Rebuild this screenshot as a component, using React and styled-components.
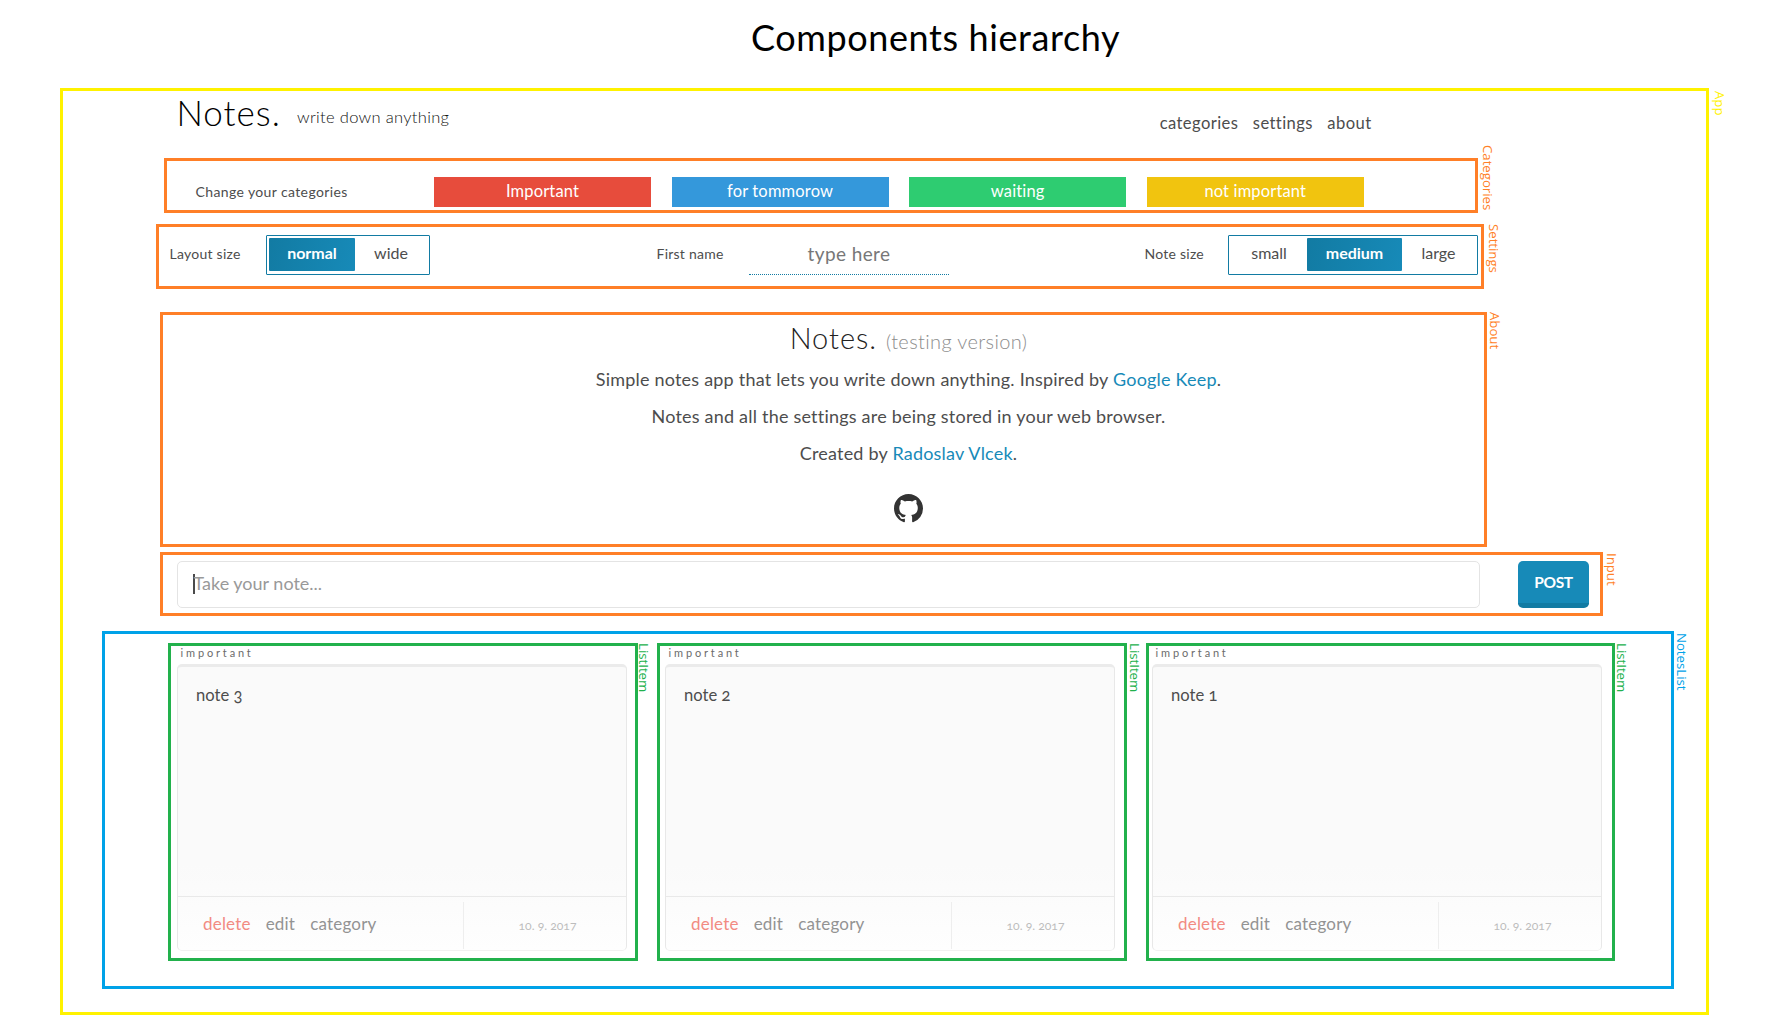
import React from "react";
import styled, { createGlobalStyle } from "styled-components";

const colors = {
  app: "#fff200",
  section: "#ff7f27",
  list: "#00a2e8",
  item: "#22b14c",
  primary: "#178ab8",
  primaryDark: "#127ba3",
  text: "#4d4d4d",
};

const GlobalStyle = createGlobalStyle`
  *, *::before, *::after { box-sizing: border-box; }
  body {
    margin: 0;
    background: #fff;
    color: ${colors.text};
    font-family: Lato, "Liberation Sans", sans-serif;
    white-space: nowrap;
  }
  h1, h2, p { margin: 0; font-weight: 400; }
`;

const Page = styled.main`
  width: 1782px;
  height: 1024px;
  overflow: hidden;
  display: flex;
  flex-direction: column;
`;

const Title = styled.h1`
  height: 88px;
  padding: 14px 0 0 751px;
  color: #000;
  font-size: 36px;
  line-height: 47px;
  letter-spacing: 0.6px;
`;

/* Outlined region that carries the name of its component on the right edge */
const Frame = styled.section`
  position: relative;
  flex: none;
  width: ${(p) => p.$width}px;
  height: ${(p) => p.$height}px;
  margin: ${(p) => p.$top || 0}px 0 0 ${(p) => p.$left || 0}px;
  border: 3px solid ${(p) => p.$color};
`;

const FrameName = styled.span`
  position: absolute;
  left: calc(100% + ${(p) => p.$x}px);
  top: ${(p) => p.$y}px;
  writing-mode: vertical-rl;
  color: ${(p) => p.$color};
  font-family: "Open Sans", sans-serif;
  font-size: 13.2px;
  line-height: 16px;
`;

const Header = styled.header`
  display: flex;
  align-items: flex-start;
  height: 67px;
  padding: 2px 334.5px 0 113.5px;
`;

const Logo = styled.div`
  width: 120.5px;
  color: #000;
  font-size: 35px;
  font-weight: 300;
  line-height: 39px;
  letter-spacing: 1px;
`;

const Tagline = styled.div`
  margin-top: 14px;
  color: #111;
  font-size: 16.5px;
  font-weight: 300;
  line-height: 20px;
  letter-spacing: 0.32px;
`;

const Nav = styled.nav`
  display: flex;
  gap: 14.5px;
  margin: 20px 0 0 auto;
  font-size: 16.6px;
  line-height: 20px;
  letter-spacing: 0.4px;
`;

const CategoryRow = styled.div`
  display: flex;
  gap: 20.6px;
  padding: 16px 0 0 28.5px;
`;

const CategoryLabel = styled.div`
  width: 217.9px;
  padding-top: 5px;
  font-size: 14px;
  line-height: 20px;
  letter-spacing: 0.38px;
`;

const CategoryChip = styled.div`
  width: 217px;
  height: 30px;
  background: ${(p) => p.$color};
  color: #fff;
  font-size: 16.5px;
  line-height: 29px;
  letter-spacing: 0.15px;
  text-align: center;
`;

const SettingsRow = styled.div`
  display: grid;
  grid-template-columns: 487px 488px auto;
  padding: 8px 0 0 11px;
`;

const Setting = styled.div`
  display: flex;
`;

const SettingLabel = styled.label`
  width: ${(p) => p.$width}px;
  padding-top: 9px;
  font-size: 14px;
  line-height: 20px;
  letter-spacing: 0.25px;
  text-indent: -0.5px;
`;

const Toggle = styled.div`
  display: flex;
  height: 40px;
  padding: 2px;
  border: 1px solid ${colors.primaryDark};
  border-radius: 1px;
`;

const Segment = styled.div`
  width: ${(p) => p.$width}px;
  height: 33px;
  border-radius: 1px;
  background: ${(p) =>
    p.$active
      ? `linear-gradient(100deg, ${colors.primaryDark}, ${colors.primary})`
      : "none"};
  color: ${(p) => (p.$active ? "#fff" : colors.text)};
  font-size: 16px;
  font-weight: ${(p) => (p.$active ? 700 : 400)};
  line-height: 30px;
  text-align: center;
`;

const NameField = styled.div`
  width: 200px;
  height: 40px;
  border-bottom: 1px dotted ${colors.primaryDark};
  color: #777;
  font-size: 19px;
  line-height: 37px;
  letter-spacing: 0.4px;
  text-align: center;
`;

const AboutBody = styled.div`
  display: flex;
  flex-direction: column;
  align-items: center;
  padding: 3px 0 0 170px;
`;

const AboutTitle = styled.h2`
  color: #222;
  font-size: 29px;
  font-weight: 300;
  line-height: 40px;
  letter-spacing: 1px;
`;

const Version = styled.span`
  color: #8c8c8c;
  font-size: 20px;
  letter-spacing: 0.37px;
`;

const AboutLine = styled.p`
  font-size: 18px;
  line-height: 37.2px;
  letter-spacing: 0.21px;
`;

const Link = styled.a`
  color: ${colors.primary};
`;

const GithubIcon = styled.svg`
  width: 29px;
  height: 29px;
  margin-top: 21.3px;
  fill: #333;
`;

const InputRow = styled.div`
  display: flex;
  gap: 38px;
  padding: 6px 0 0 14px;
`;

const NoteField = styled.div`
  display: flex;
  width: 1303px;
  height: 47px;
  padding-left: 15px;
  border: 1px solid #e4e4e4;
  border-radius: 5px;
  color: #999;
  font-size: 18px;
  line-height: 43px;
`;

const Caret = styled.span`
  width: 2px;
  height: 20px;
  margin: 12px -1.5px 0 0;
  background: #4a4a4a;
`;

const PostButton = styled.div`
  width: 71px;
  height: 47px;
  border-bottom: 5px solid ${colors.primaryDark};
  border-radius: 5px;
  background: ${colors.primary};
  color: #fff;
  font-size: 15.5px;
  font-weight: 700;
  line-height: 43px;
  letter-spacing: -0.3px;
  text-align: center;
`;

const Notes = styled.div`
  display: flex;
  gap: 19px;
  padding: 9px 0 0 63px;
`;

const NoteCategory = styled.div`
  height: 18px;
  padding-left: ${(p) => p.$inset + 3.5}px;
  color: #6b6b6b;
  font-size: 11px;
  line-height: 14px;
  letter-spacing: 2.85px;
`;

const Card = styled.article`
  display: flex;
  flex-direction: column;
  width: 450px;
  height: 287px;
  margin-left: ${(p) => p.$inset}px;
  border: 1px solid #e8e8e8;
  border-top: 3px solid #ebebeb;
  border-bottom-color: #f1f1f1;
  border-radius: 5px;
  background: linear-gradient(#fafafa 70%, #fefefe);
`;

const CardText = styled.div`
  height: 229px;
  padding: 17.5px 0 0 18px;
  font-size: 16.6px;
  line-height: 20px;
  font-variant-numeric: oldstyle-nums;
`;

const CardFooter = styled.footer`
  display: flex;
  flex: 1;
  border-top: 1px solid #e9e9e9;
`;

const Actions = styled.div`
  display: flex;
  gap: 15px;
  width: 285px;
  padding: 17px 0 0 25px;
  color: #939393;
  font-size: 17px;
  line-height: 20px;
  letter-spacing: 0.2px;
`;

const Action = styled.span`
  color: ${(p) => (p.$danger ? "#f28b82" : "inherit")};
`;

const DateCell = styled.div`
  flex: 1;
  height: 47px;
  margin-top: 5px;
  padding: 14px 0 0 5px;
  border-left: 1px solid #eee;
  color: #bdbdbd;
  font-size: 12.2px;
  line-height: 20px;
  text-align: center;
  font-variant-numeric: oldstyle-nums;
`;

const categories = [
  { name: "Important", color: "#e74c3c" },
  { name: "for tommorow", color: "#3498db" },
  { name: "waiting", color: "#2ecc71" },
  { name: "not important", color: "#f1c40f" },
];

const notes = [
  { text: "note 3", width: 470, inset: 6, nameX: 1 },
  { text: "note 2", width: 470, inset: 5, nameX: 3 },
  { text: "note 1", width: 469, inset: 3, nameX: 2 },
];

function Region({ name, color, x, y, children, ...box }) {
  return (
    <Frame
      $color={color}
      $width={box.width}
      $height={box.height}
      $top={box.top}
      $left={box.left}
    >
      {children}
      <FrameName $color={color} $x={x} $y={y}>
        {name}
      </FrameName>
    </Frame>
  );
}

function Note({ text, width, inset, nameX }) {
  return (
    <Region name="ListItem" color={colors.item} width={width} height={318} x={nameX} y={-3}>
      <NoteCategory $inset={inset}>important</NoteCategory>
      <Card $inset={inset}>
        <CardText>{text}</CardText>
        <CardFooter>
          <Actions>
            <Action $danger>delete</Action>
            <Action>edit</Action>
            <Action>category</Action>
          </Actions>
          <DateCell>10. 9. 2017</DateCell>
        </CardFooter>
      </Card>
    </Region>
  );
}

export default function App() {
  return (
    <Page>
      <GlobalStyle />
      <Title>Components hierarchy</Title>
      <Region name="App" color={colors.app} width={1649} height={927} left={60} x={6} y={0}>
        <Header>
          <Logo>Notes.</Logo>
          <Tagline>write down anything</Tagline>
          <Nav>
            <span>categories</span>
            <span>settings</span>
            <span>about</span>
          </Nav>
        </Header>

        <Region name="Categories" color={colors.section} width={1314} height={55} left={101} x={5} y={-16}>
          <CategoryRow>
            <CategoryLabel>Change your categories</CategoryLabel>
            {categories.map((c) => (
              <CategoryChip key={c.name} $color={c.color}>
                {c.name}
              </CategoryChip>
            ))}
          </CategoryRow>
        </Region>

        <Region name="Settings" color={colors.section} width={1328} height={65} top={11} left={93} x={5} y={-3}>
          <SettingsRow>
            <Setting>
              <SettingLabel $width={96}>Layout size</SettingLabel>
              <Toggle>
                <Segment $width={86} $active>normal</Segment>
                <Segment $width={72}>wide</Segment>
              </Toggle>
            </Setting>
            <Setting>
              <SettingLabel $width={92}>First name</SettingLabel>
              <NameField>type here</NameField>
            </Setting>
            <Setting>
              <SettingLabel $width={83}>Note size</SettingLabel>
              <Toggle>
                <Segment $width={76}>small</Segment>
                <Segment $width={95} $active>medium</Segment>
                <Segment $width={73}>large</Segment>
              </Toggle>
            </Setting>
          </SettingsRow>
        </Region>

        <Region name="About" color={colors.section} width={1327} height={235} top={23} left={97} x={3} y={-3}>
          <AboutBody>
            <AboutTitle>
              Notes. <Version>(testing version)</Version>
            </AboutTitle>
            <AboutLine>
              Simple notes app that lets you write down anything. Inspired by <Link>Google Keep</Link>.
            </AboutLine>
            <AboutLine>Notes and all the settings are being stored in your web browser.</AboutLine>
            <AboutLine>
              Created by <Link>Radoslav Vlcek</Link>.
            </AboutLine>
            <GithubIcon viewBox="0 0 16 16" aria-label="GitHub">
              <path d="M8 0C3.58 0 0 3.58 0 8c0 3.54 2.29 6.53 5.47 7.59.4.07.55-.17.55-.38 0-.19-.01-.82-.01-1.49-2.01.37-2.53-.49-2.69-.94-.09-.23-.48-.94-.82-1.13-.28-.15-.68-.52-.01-.53.63-.01 1.08.58 1.23.82.72 1.21 1.87.87 2.33.66.07-.52.28-.87.51-1.07-1.78-.2-3.64-.89-3.64-3.95 0-.87.31-1.59.82-2.15-.08-.2-.36-1.02.08-2.12 0 0 .67-.21 2.2.82.64-.18 1.32-.27 2-.27.68 0 1.36.09 2 .27 1.53-1.04 2.2-.82 2.2-.82.44 1.1.16 1.92.08 2.12.51.56.82 1.27.82 2.15 0 3.07-1.87 3.75-3.65 3.95.29.25.54.73.54 1.48 0 1.07-.01 1.93-.01 2.2 0 .21.15.46.55.38A8.013 8.013 0 0016 8c0-4.42-3.58-8-8-8z" />
            </GithubIcon>
          </AboutBody>
        </Region>

        <Region name="Input" color={colors.section} width={1443} height={64} top={5} left={97} x={4} y={-2}>
          <InputRow>
            <NoteField>
              <Caret />
              Take your note...
            </NoteField>
            <PostButton>POST</PostButton>
          </InputRow>
        </Region>

        <Region name="NotesList" color={colors.list} width={1572} height={358} top={15} left={39} x={3} y={-1}>
          <Notes>
            {notes.map((n) => (
              <Note key={n.text} {...n} />
            ))}
          </Notes>
        </Region>
      </Region>
    </Page>
  );
}
